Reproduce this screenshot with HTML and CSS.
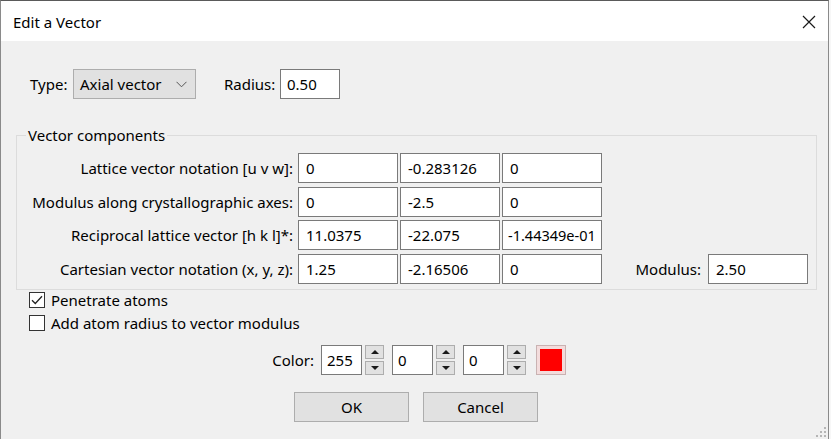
FILE: index.html
```html
<!DOCTYPE html>
<html>
<head>
<meta charset="utf-8">
<link rel="stylesheet" href="styles.css">
</head>
<body>
<div class="window">
  <div class="titlebar">
    <span class="title">Edit a Vector</span>
    <svg class="close" width="14" height="14" viewBox="0 0 14 14"><path d="M1 1L13 13M13 1L1 13" stroke="#1a1a1a" stroke-width="1.2" fill="none"/></svg>
  </div>
  <div class="content">
    <div class="type-row">
      <span class="type-lbl">Type:</span>
      <div class="combo"><span>Axial vector</span><svg width="11" height="7" viewBox="0 0 11 7"><path d="M0.5 0.8L5.5 5.8L10.5 0.8" stroke="#555" stroke-width="1" fill="none"/></svg></div>
      <span class="radius-lbl">Radius:</span>
      <div class="field radius">0.50</div>
    </div>
    <fieldset class="group">
      <legend>Vector components</legend>
      <div class="grid">
        <span class="rlbl">Lattice vector notation [u v w]:</span>
        <div class="field">0</div><div class="field">-0.283126</div><div class="field">0</div>
        <span></span><span></span>
        <span class="rlbl">Modulus along crystallographic axes:</span>
        <div class="field">0</div><div class="field">-2.5</div><div class="field">0</div>
        <span></span><span></span>
        <span class="rlbl">Reciprocal lattice vector [h k l]*:</span>
        <div class="field">11.0375</div><div class="field">-22.075</div><div class="field clip">-1.44349e-01</div>
        <span></span><span></span>
        <span class="rlbl">Cartesian vector notation (x, y, z):</span>
        <div class="field">1.25</div><div class="field">-2.16506</div><div class="field">0</div>
        <span class="mlbl">Modulus:</span><div class="field">2.50</div>
      </div>
    </fieldset>
    <div class="checks">
      <div class="check"><span class="box"><svg width="14" height="14" viewBox="0 0 14 14"><path d="M2 7.2L5.3 10.5L12 3.3" stroke="#222" stroke-width="1.3" fill="none"/></svg></span><span>Penetrate atoms</span></div>
      <div class="check"><span class="box"></span><span>Add atom radius to vector modulus</span></div>
    </div>
    <div class="color-row">
      <span class="color-lbl">Color:</span>
      <div class="field num">255</div>
      <div class="spin"><span class="sb"><i class="up"></i></span><span class="sb"><i class="down"></i></span></div>
      <div class="field num">0</div>
      <div class="spin"><span class="sb"><i class="up"></i></span><span class="sb"><i class="down"></i></span></div>
      <div class="field num">0</div>
      <div class="spin"><span class="sb"><i class="up"></i></span><span class="sb"><i class="down"></i></span></div>
      <div class="swatch"><span></span></div>
    </div>
    <div class="buttons">
      <div class="btn">OK</div>
      <div class="btn">Cancel</div>
    </div>
    <svg class="grip" width="11" height="11" viewBox="0 0 11 11">
      <g fill="#b5b5b5"><rect x="8" y="0" width="2" height="2"/><rect x="4" y="4" width="2" height="2"/><rect x="8" y="4" width="2" height="2"/><rect x="0" y="8" width="2" height="2"/><rect x="4" y="8" width="2" height="2"/><rect x="8" y="8" width="2" height="2"/></g>
    </svg>
  </div>
</div>
</body>
</html>
```
FILE: styles.css
```css
html, body {
  margin: 0;
  padding: 0;
  background: #f7f7f7;
}
body {
  font-family: "Noto Sans", "Open Sans", sans-serif;
  font-size: 15px;
  color: #000;
}
.window {
  width: 829px;
  height: 439px;
  box-sizing: border-box;
  border-top: 1px solid #5a5a5a;
  border-left: 1px solid #8a8a8a;
  border-right: 1px solid #8a8a8a;
  display: flex;
  flex-direction: column;
}
.titlebar {
  height: 40px;
  flex: none;
  background: #fff;
  display: flex;
  align-items: center;
  justify-content: space-between;
  padding: 1px 12px 0 12px;
  box-sizing: border-box;
}
.title {
  font-size: 15px;
}
.close {
  display: block;
}
.content {
  flex: 1;
  background: #f0f0f0;
  position: relative;
  padding-top: 28px;
  display: flex;
  flex-direction: column;
}
.type-row {
  display: flex;
  align-items: center;
  height: 30px;
  padding-left: 29px;
}
.type-lbl {
  width: 43px;
}
.combo {
  width: 123px;
  height: 30px;
  box-sizing: border-box;
  background: #e1e1e1;
  border: 1px solid #adadad;
  display: flex;
  align-items: center;
  justify-content: space-between;
  padding: 0 8px 0 6px;
}
.radius-lbl {
  margin-left: 28px;
  width: 56px;
}
.field {
  height: 30px;
  box-sizing: border-box;
  background: #fff;
  border: 1px solid #7a7a7a;
  display: flex;
  align-items: center;
  padding-left: 7px;
  white-space: nowrap;
  overflow: hidden;
}
.radius {
  width: 60px;
  padding-left: 6px;
}
.group {
  margin: 26px 0 0 15px;
  width: 801px;
  box-sizing: border-box;
  border: 1px solid #dcdcdc;
  padding: 0 8px 5px 0;
}
.group legend {
  margin-left: 9px;
  padding: 0 2px;
  line-height: 20px;
}
.grid {
  display: grid;
  grid-template-columns: 279px 100px 100px 100px 1fr 100px;
  grid-auto-rows: 30px;
  column-gap: 2px;
  row-gap: 3.5px;
  padding-top: 8px;
}
.rlbl {
  text-align: right;
  padding-right: 3px;
  align-self: center;
  white-space: nowrap;
}
.mlbl {
  text-align: right;
  padding-right: 5px;
  align-self: center;
}
.field.clip {
  padding-left: 5px;
  font-size: 14.5px;
}
.checks {
  padding-left: 28px;
  margin-top: -1px;
  display: flex;
  flex-direction: column;
}
.check {
  height: 23px;
  display: flex;
  align-items: center;
}
.box {
  width: 16px;
  height: 16px;
  box-sizing: border-box;
  border: 1px solid #333;
  background: #fff;
  margin-right: 6px;
  display: flex;
  align-items: center;
  justify-content: center;
}
.box svg {
  display: block;
}
.color-row {
  display: flex;
  align-items: center;
  margin-top: 10px;
  padding-left: 267px;
  height: 30px;
}
.color-lbl {
  width: 46px;
  text-align: right;
  margin-right: 7px;
}
.field.num {
  width: 41px;
  padding-left: 5px;
}
.spin {
  margin: 0 8px 0 3px;
  width: 19px;
  height: 30px;
  display: flex;
  flex-direction: column;
  justify-content: space-between;
}
.sb {
  height: 14px;
  box-sizing: border-box;
  background: #e1e1e1;
  border: 1px solid #adadad;
  display: flex;
  align-items: center;
  justify-content: center;
}
.sb i {
  width: 0;
  height: 0;
  border-left: 4px solid transparent;
  border-right: 4px solid transparent;
}
.sb i.up {
  border-bottom: 4px solid #1a1a1a;
}
.sb i.down {
  border-top: 4px solid #1a1a1a;
}
.swatch {
  margin-left: 2px;
  width: 30px;
  height: 30px;
  box-sizing: border-box;
  border: 1px solid #c9b2b2;
  background: #f3dcdc;
  padding: 3px;
}
.swatch span {
  display: block;
  width: 100%;
  height: 100%;
  background: #ff0000;
}
.buttons {
  display: flex;
  margin-top: 17px;
  padding-left: 293px;
  gap: 14px;
}
.btn {
  width: 115px;
  height: 30px;
  box-sizing: border-box;
  background: #e1e1e1;
  border: 1px solid #adadad;
  display: flex;
  align-items: center;
  justify-content: center;
  font-size: 15px;
}
.grip {
  position: absolute;
  right: 1px;
  bottom: 1px;
}
```
